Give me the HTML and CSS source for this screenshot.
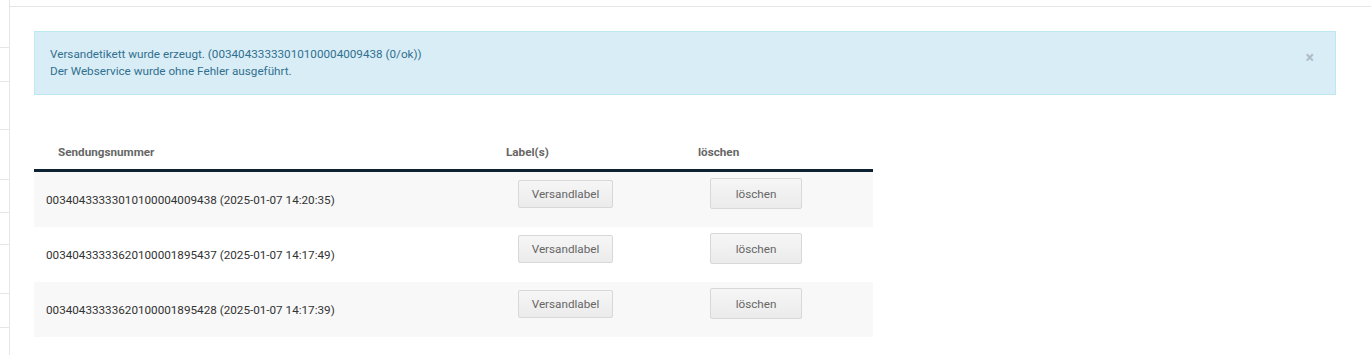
FILE: index.html
```html
<!DOCTYPE html>
<html>
<head>
    <title>Versandetiketten</title>
    <link rel="stylesheet" href="styles.css">
</head>
<body>
    <div class="layout">
        <!-- schmale Seitenleiste links -->
        <div class="sidebar">
            <div class="side-row h47"></div>
            <div class="side-row h34"></div>
            <div class="side-row h48"></div>
            <div class="side-row h50"></div>
            <div class="side-row h33"></div>
            <div class="side-row h32"></div>
            <div class="side-row h49"></div>
            <div class="side-row h34"></div>
        </div>

        <div class="main">
            <div class="topbar"></div>

            <div class="content">
                <div class="alert">
                    <span class="alert-close">&times;</span>
                    Versandetikett wurde erzeugt. (00340433333010100004009438 (0/ok))<br>
                    Der Webservice wurde ohne Fehler ausgeführt.
                </div>

                <table class="shipments">
                    <thead>
                        <tr>
                            <th class="col-number">Sendungsnummer</th>
                            <th class="col-label">Label(s)</th>
                            <th class="col-delete">löschen</th>
                        </tr>
                    </thead>
                    <tbody>
                        <tr>
                            <td>00340433333010100004009438 (2025-01-07 14:20:35)</td>
                            <td><a class="btn btn-label" href="#">Versandlabel</a></td>
                            <td><button class="btn btn-delete">löschen</button></td>
                        </tr>
                        <tr>
                            <td>00340433333620100001895437 (2025-01-07 14:17:49)</td>
                            <td><a class="btn btn-label" href="#">Versandlabel</a></td>
                            <td><button class="btn btn-delete">löschen</button></td>
                        </tr>
                        <tr>
                            <td>00340433333620100001895428 (2025-01-07 14:17:39)</td>
                            <td><a class="btn btn-label" href="#">Versandlabel</a></td>
                            <td><button class="btn btn-delete">löschen</button></td>
                        </tr>
                    </tbody>
                </table>
            </div>
        </div>
    </div>
</body>
</html>
```

FILE: styles.css
```css
/* Grundlayout */
body {
    margin: 0;
    font-family: Roboto, "Liberation Sans", Arial, sans-serif;
    font-size: 11.7px;
    color: #333;
    background: #fff;
}

.layout {
    display: flex;
    min-height: 355px;
}

/* Seitenleiste */
.sidebar {
    width: 9px;
    border-right: 1px solid #e6e6e6;
    flex-shrink: 0;
}

.side-row {
    border-bottom: 1px solid #e6e6e6;
    box-sizing: border-box;
}

.h32 { height: 32px; }
.h33 { height: 33px; }
.h34 { height: 34px; }
.h47 { height: 48px; }
.h48 { height: 48px; }
.h49 { height: 49px; }
.h50 { height: 50px; }

.main {
    flex: 1;
}

.topbar {
    height: 6px;
    border-bottom: 1px solid #e6e6e6;
}

.content {
    padding: 24px 35px 0 24px;
}

/* Hinweisbox */
.alert {
    background-color: #d9edf7;
    border: 1px solid #bce8f1;
    color: #31708f;
    line-height: 17px;
    padding: 14px 15px 15px;
    height: 33px;
}

.alert-close {
    float: right;
    margin-right: 6px;
    margin-top: 6px;
    font-size: 16px;
    font-weight: bold;
    line-height: 12px;
    color: #000;
    opacity: 0.2;
}

/* Tabelle */
.shipments {
    margin-top: 39px;
    width: 839px;
    border-collapse: collapse;
}

.shipments th {
    text-align: left;
    font-weight: bold;
    color: #666;
    height: 35px;
    padding: 0 12px;
    vertical-align: middle;
    border-bottom: 3px solid #0d2233;
}

.shipments th.col-number {
    width: 424px;
    padding-left: 24px;
}

.shipments th.col-label {
    width: 168px;
}

.shipments td {
    height: 55px;
    padding: 0 12px;
    vertical-align: middle;
}

.shipments tbody tr:nth-child(odd) {
    background-color: #f8f8f8;
}

/* Buttons */
.btn {
    display: inline-block;
    box-sizing: border-box;
    font-family: Roboto, "Liberation Sans", Arial, sans-serif;
    font-size: 11.7px;
    color: #666;
    text-decoration: none;
    text-align: center;
    background: linear-gradient(#f6f6f6, #ebebeb);
    border: 1px solid #d8d8d8;
    border-radius: 2px;
    position: relative;
    top: -6px;
    margin-left: 12px;
    cursor: pointer;
}

.btn-label {
    width: 95px;
    height: 28px;
    line-height: 26px;
}

.btn-delete {
    width: 92px;
    height: 31px;
    padding: 0;
}
```
